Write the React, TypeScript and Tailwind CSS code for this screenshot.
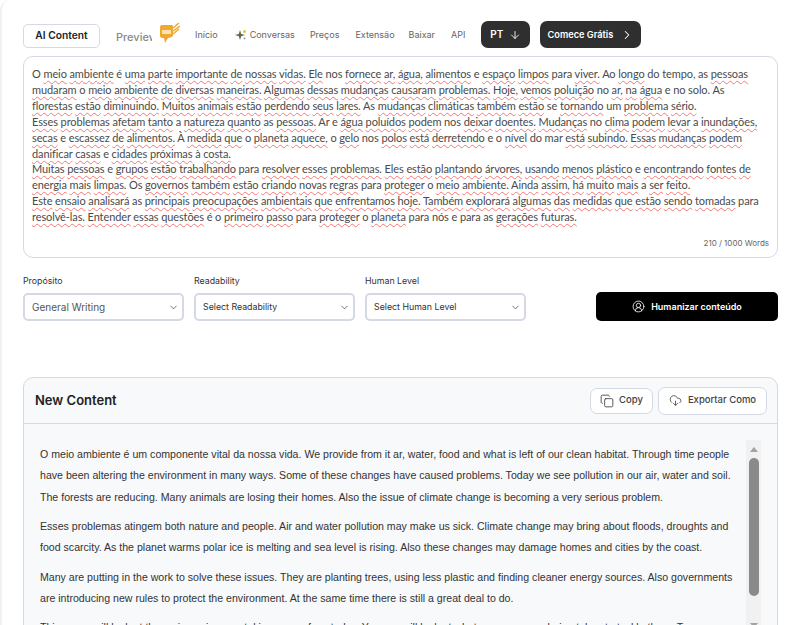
import React from 'react';
import { ArrowDown, ChevronDown, ChevronRight, Copy, CloudDownload, CircleUserRound } from 'lucide-react';

const inputLines = [
  'O meio ambiente é uma parte importante de nossas vidas. Ele nos fornece ar, água, alimentos e espaço limpos para viver. Ao longo do tempo, as pessoas',
  'mudaram o meio ambiente de diversas maneiras. Algumas dessas mudanças causaram problemas. Hoje, vemos poluição no ar, na água e no solo. As',
  'florestas estão diminuindo. Muitos animais estão perdendo seus lares. As mudanças climáticas também estão se tornando um problema sério.',
  'Esses problemas afetam tanto a natureza quanto as pessoas. Ar e água poluídos podem nos deixar doentes. Mudanças no clima podem levar a inundações,',
  'secas e escassez de alimentos. À medida que o planeta aquece, o gelo nos polos está derretendo e o nível do mar está subindo. Essas mudanças podem',
  'danificar casas e cidades próximas à costa.',
  'Muitas pessoas e grupos estão trabalhando para resolver esses problemas. Eles estão plantando árvores, usando menos plástico e encontrando fontes de',
  'energia mais limpas. Os governos também estão criando novas regras para proteger o meio ambiente. Ainda assim, há muito mais a ser feito.',
  'Este ensaio analisará as principais preocupações ambientais que enfrentamos hoje. Também explorará algumas das medidas que estão sendo tomadas para',
  'resolvê-las. Entender essas questões é o primeiro passo para proteger o planeta para nós e para as gerações futuras.',
];

// words the spell checker leaves alone in the reference
const cleanWords = new Set(['o', 'é', 'e', 'a', 'à', 'as', 'ar', 'no', 'do', 'se', 'um', 'ao', 'os', 'nos', 'mar', 'solo', 'para', 'tempo,', 'nós']);

const outputParagraphs = [
  [
    'O meio ambiente é um componente vital da nossa vida. We provide from it ar, water, food and what is left of our clean habitat. Through time people',
    'have been altering the environment in many ways. Some of these changes have caused problems. Today we see pollution in our air, water and soil.',
    'The forests are reducing. Many animals are losing their homes. Also the issue of climate change is becoming a very serious problem.',
  ],
  [
    'Esses problemas atingem both nature and people. Air and water pollution may make us sick. Climate change may bring about floods, droughts and',
    'food scarcity. As the planet warms polar ice is melting and sea level is rising. Also these changes may damage homes and cities by the coast.',
  ],
  [
    'Many are putting in the work to solve these issues. They are planting trees, using less plastic and finding cleaner energy sources. Also governments',
    'are introducing new rules to protect the environment. At the same time there is still a great deal to do.',
  ],
  [
    'This essay will look at the main environmental issues we face today. You can will look at what measures are being taken to tackle them. To',
  ],
];

function SpellLine({ text }: { text: string }) {
  const words = text.split(' ');
  return (
    <div className="whitespace-nowrap">
      {words.map((word, i) => {
        const bare = word.replace(/\./g, '').toLowerCase();
        const flagged = !cleanWords.has(bare);
        return (
          <React.Fragment key={i}>
            {flagged ? (
              <span className="underline decoration-wavy decoration-[#f47878] decoration-1 underline-offset-2">{word}</span>
            ) : (
              word
            )}
            {i < words.length - 1 ? ' ' : ''}
          </React.Fragment>
        );
      })}
    </div>
  );
}

function SelectBox({ label, value, width, big }: { label: string; value: string; width: string; big?: boolean }) {
  return (
    <div className={width}>
      <div className="mb-[5px] text-[8.8px] leading-[14px] text-[#333]">{label}</div>
      <div className="flex h-[28px] items-center justify-between rounded-[5px] border-2 border-[#d5d8e5] bg-white pl-[7px] pr-[3px]">
        <span className={big ? 'text-[10px] text-[#555]' : 'text-[8.8px] text-[#333]'}>{value}</span>
        <ChevronDown size={11} strokeWidth={1.5} className="text-[#333]" />
      </div>
    </div>
  );
}

export default function App() {
  return (
    <div className="h-[625px] w-[798px] overflow-hidden bg-white font-['Inter',sans-serif]">
      <div className="h-[640px] rounded-tl-[10px] border-l-2 border-[#f1f1f3] pl-[21px] pr-[20px] pt-[21px]">
        <nav className="flex h-[27px] items-start">
          <button className="mt-[3px] h-[24px] w-[77px] rounded-[5px] border border-[#d5d8e5] text-[10.25px] font-semibold text-[#222]">AI Content</button>
          <span className="ml-[16px] mt-[9px] w-[36px] overflow-hidden text-[11px] font-medium leading-[14px] text-[#888]">Preview</span>
          <svg className="ml-[8px] mt-[2px]" width="20" height="21" viewBox="0 0 20 21">
            <path d="M2 2 L12 2 Q13 2 13 4 L13 13 Q11 15 8 15 L5 20 L4 15 Q0 15 0 13 L0 4 Q0 2 2 2 Z" fill="#f0a92e" />
            <path d="M13 5 L19 0 M13 8 L20 3 M13 11 L19 6" stroke="#f0a92e" strokeWidth="1.5" fill="none" />
            <rect x="2" y="7" width="9" height="4" fill="#fbe3ae" />
          </svg>
          <div className="mt-[7px] flex items-center text-[9px] leading-[14px] text-[#666]">
            <span className="ml-[15px]">Início</span>
            <svg className="ml-[17px]" width="12" height="12" viewBox="0 0 12 12">
              <path d="M5 1 L6.2 5 L10 6 L6.2 7.2 L5 11 L3.8 7.2 L0 6 L3.8 5 Z" fill="#5d6a45" />
              <circle cx="9.5" cy="2.5" r="1.5" fill="#e8c23c" />
              <circle cx="9.5" cy="9.5" r="1" fill="#8aa0c8" />
            </svg>
            <span className="ml-[3px]">Conversas</span>
            <span className="ml-[15px]">Preços</span>
            <span className="ml-[16px]">Extensão</span>
            <span className="ml-[14px]">Baixar</span>
            <span className="ml-[16px]">API</span>
          </div>
          <button className="ml-[16px] flex h-[27px] w-[49px] items-center justify-center gap-[6px] rounded-[7px] bg-[#2f2f2f] text-[10px] font-semibold text-white">
            PT <ArrowDown size={12} strokeWidth={1.75} />
          </button>
          <button className="ml-[10px] flex h-[27px] w-[101px] items-center justify-center gap-[7px] rounded-[7px] bg-[#2f2f2f] text-[9.2px] font-semibold text-white">
            Comece Grátis <ChevronRight size={14} strokeWidth={1.75} />
          </button>
        </nav>

        <div className="relative mt-[8px] h-[202px] rounded-[10px] border border-[#d5d8e5] px-[8px] pt-[9px] font-['Lato',sans-serif] text-[11px] leading-[15.9px] tracking-[-0.1px] text-[#4a4a4a]">
          {inputLines.map((line, i) => (
            <SpellLine key={i} text={line} />
          ))}
          <div className="absolute bottom-[9px] right-[8px] font-['Inter',sans-serif] text-[8px] leading-[10px] tracking-normal text-[#666]">210 / 1000 Words</div>
        </div>

        <div className="mt-[16px] flex items-start">
          <SelectBox label="Propósito" value="General Writing" width="w-[161px]" big />
          <SelectBox label="Readability" value="Select Readability" width="ml-[10px] w-[161px]" />
          <SelectBox label="Human Level" value="Select Human Level" width="ml-[10px] w-[161px]" />
          <button className="ml-[70px] mt-[18px] flex h-[29px] w-[182px] items-center justify-center gap-[6px] rounded-[5px] bg-black text-[9px] font-semibold text-white">
            <CircleUserRound size={13} strokeWidth={1.5} /> Humanizar conteúdo
          </button>
        </div>

        <section className="mt-[56px] h-[300px] rounded-t-[10px] border border-[#d5d8e5] bg-[#f8f9fb]">
          <header className="flex h-[46px] items-center border-b border-[#d5d8e5] pl-[11px] pr-[10px]">
            <h2 className="pt-[1px] text-[13px] font-semibold text-[#222]">New Content</h2>
            <button className="ml-auto flex h-[26px] w-[63px] items-center justify-center gap-[5px] rounded-[7px] border border-[#d5d8e5] bg-white text-[9.5px] font-medium text-[#444]">
              <Copy size={14} strokeWidth={1.5} /> Copy
            </button>
            <button className="ml-[5px] flex h-[28px] w-[109px] items-center justify-center gap-[6px] rounded-[7px] border border-[#d5d8e5] bg-white text-[9.5px] font-medium text-[#444]">
              <CloudDownload size={13} strokeWidth={1.5} /> Exportar Como
            </button>
          </header>
          <div className="flex pl-[16px] pt-[16px]">
            <div className="w-[706px] pt-[4px] font-['Liberation_Sans',sans-serif] text-[10.6px] leading-[21.33px] text-[#333]">
              {outputParagraphs.map((para, i) => (
                <div key={i} className="mb-[8px] last:mt-[2px]">
                  {para.map((line, j) => (
                    <div key={j} className="whitespace-nowrap">{line}</div>
                  ))}
                </div>
              ))}
            </div>
            <div className="flex h-[190px] w-[15px] flex-col items-center bg-[#f1f1f1]">
              <div className="mt-[7px] h-0 w-0 border-x-[4px] border-b-[5px] border-x-transparent border-b-[#a3a3a3]" />
              <div className="mt-[6px] h-[138px] w-[10px] rounded-full bg-[#8a8a8a]" />
              <div className="mt-[27px] h-0 w-0 border-x-[4px] border-t-[5px] border-x-transparent border-t-[#a3a3a3]" />
            </div>
          </div>
        </section>
      </div>
    </div>
  );
}
